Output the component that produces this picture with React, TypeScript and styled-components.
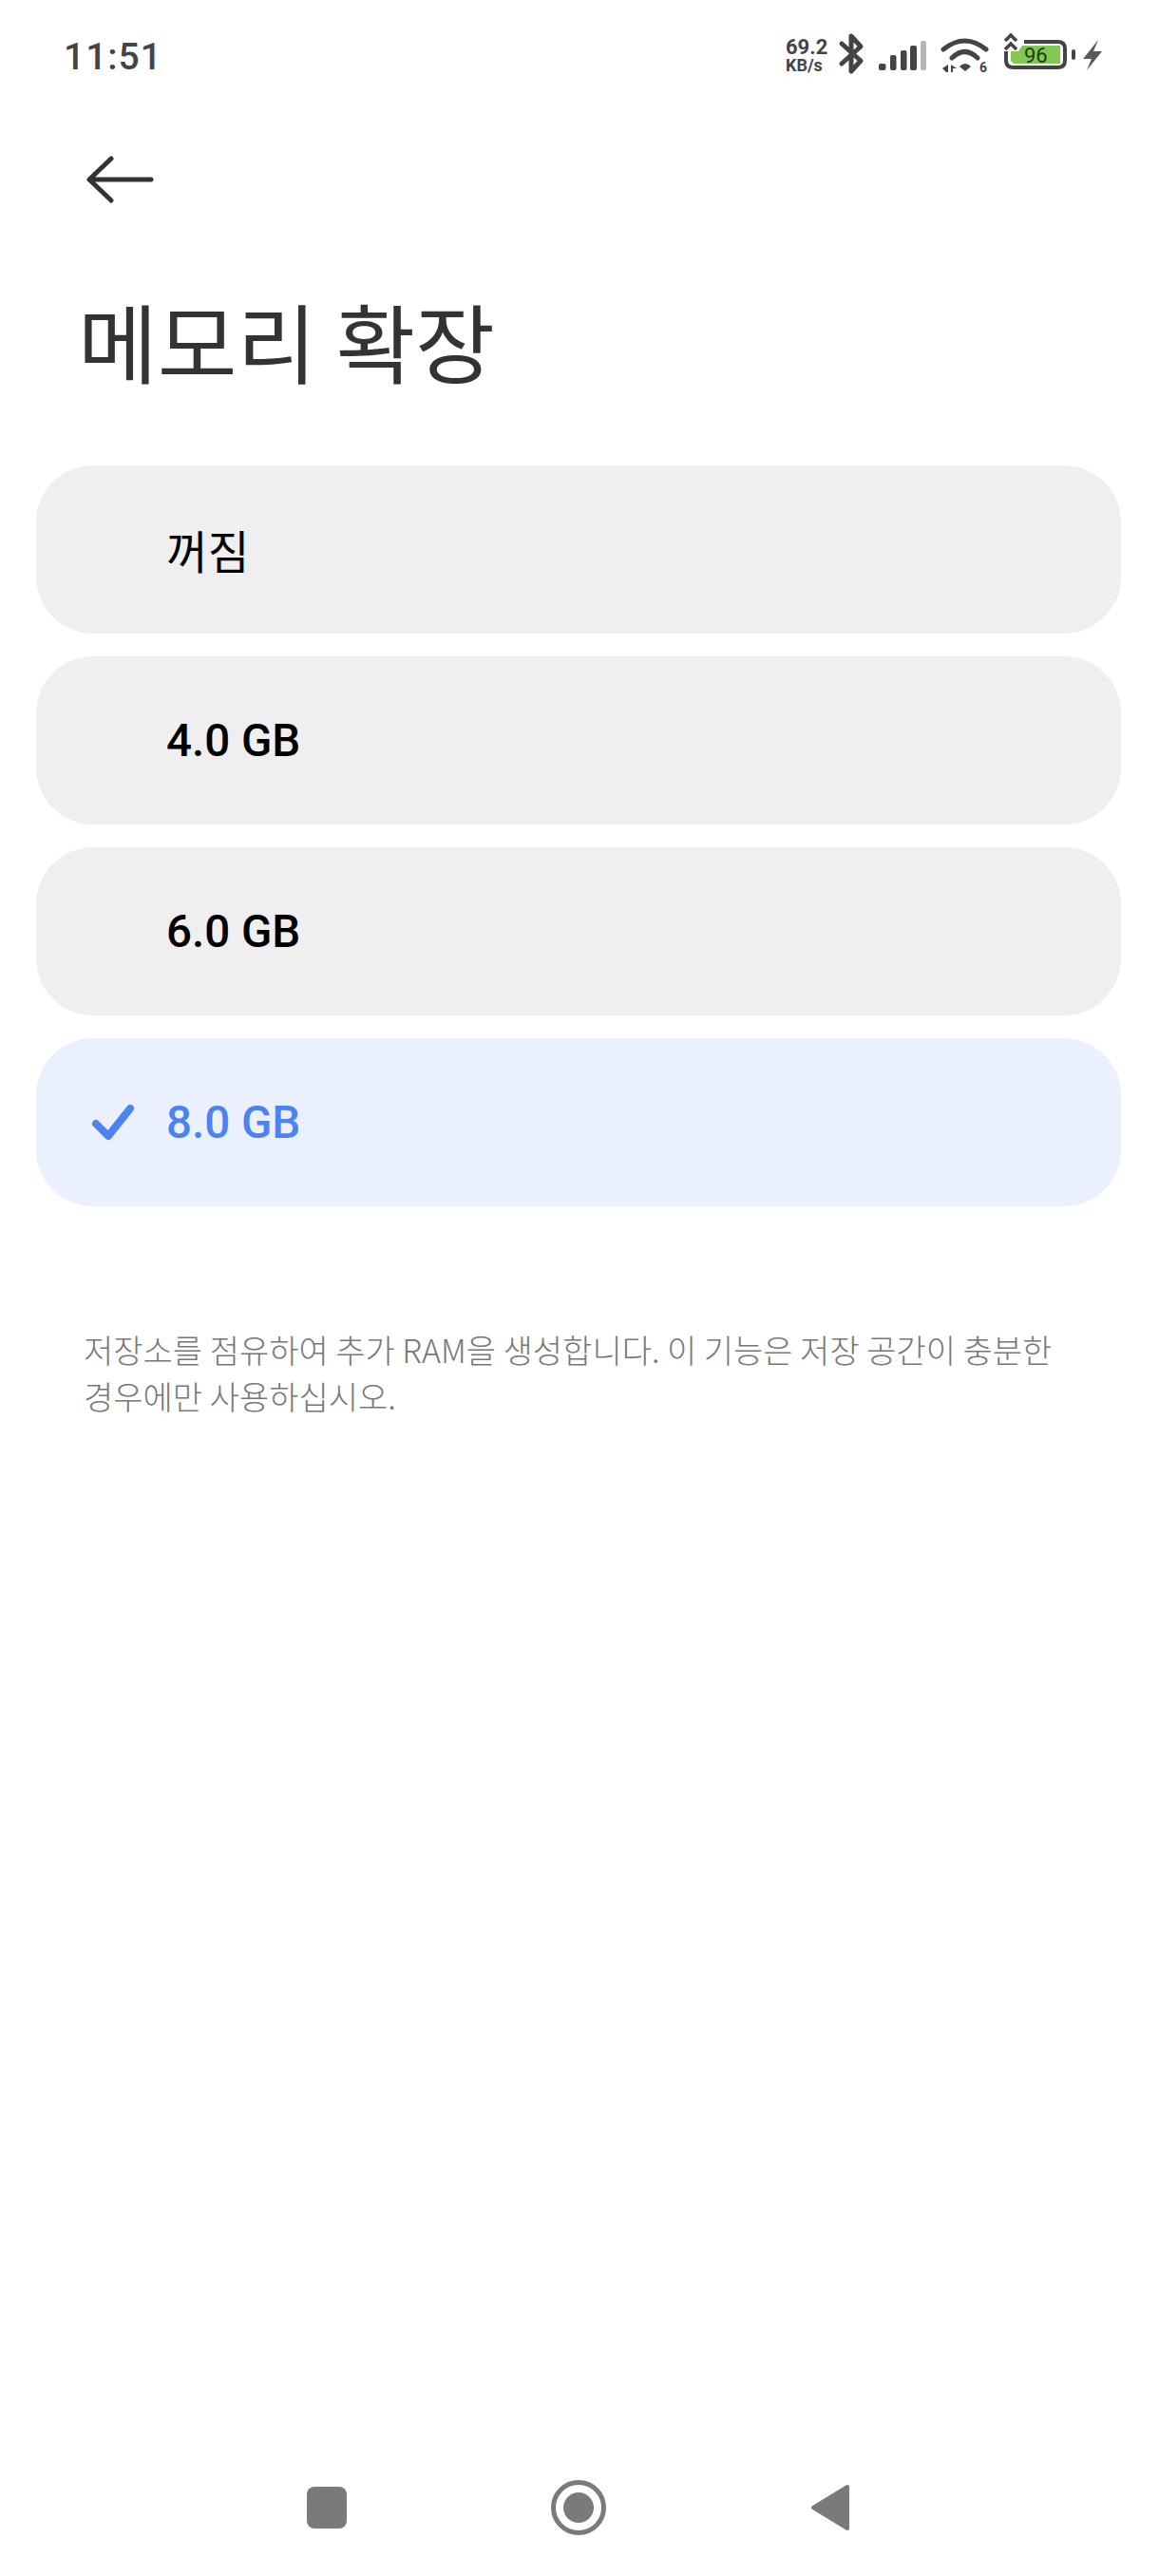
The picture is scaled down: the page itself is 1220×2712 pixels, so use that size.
import styled, { createGlobalStyle } from 'styled-components';

const GlobalStyle = createGlobalStyle`
  html, body {
    margin: 0;
    padding: 0;
    background: #ffffff;
  }
`;

const Screen = styled.div`
  width: 1220px;
  height: 2712px;
  display: flex;
  flex-direction: column;
  overflow: hidden;
  background: #ffffff;
  font-family: Roboto, 'Noto Sans CJK KR', sans-serif;
`;

const StatusBar = styled.div`
  height: 60px;
  padding: 28px 55px 0 67px;
  display: flex;
  align-items: center;
  justify-content: space-between;
`;

const Clock = styled.div`
  font-size: 39px;
  font-weight: 500;
  letter-spacing: 1px;
  color: #444444;
  transform: translateY(2px);
`;

const StatusIcons = styled.div`
  display: flex;
  align-items: center;
`;

const BackRow = styled.div`
  margin-top: 76px;
  padding-left: 91px;
  height: 50px;
  display: flex;
  align-items: center;
`;

const Title = styled.h1`
  margin: 88px 0 0 82px;
  font-family: 'Noto Sans CJK KR', sans-serif;
  font-size: 91px;
  line-height: 110px;
  font-weight: 400;
  color: #333333;
`;

const OptionList = styled.div`
  margin: 78px 40px 0 38px;
  display: flex;
  flex-direction: column;
  gap: 24px;
`;

const Option = styled.div<{ $selected?: boolean; $hangul?: boolean }>`
  height: 177px;
  border-radius: 60px;
  display: flex;
  align-items: center;
  position: relative;
  padding-left: 137px;
  background: ${(p) => (p.$selected ? '#eaf1fd' : '#efefef')};
  color: ${(p) => (p.$selected ? '#4d82f3' : '#000000')};
  font-size: 47.5px;
  font-weight: ${(p) => (p.$hangul ? 400 : 500)};
`;

const CheckMark = styled.svg`
  position: absolute;
  left: 57px;
  top: 62px;
`;

const Description = styled.p`
  margin: 126px 70px 0 88px;
  font-family: 'Noto Sans CJK KR', Roboto, sans-serif;
  font-size: 34px;
  font-weight: 300;
  line-height: 49px;
  color: #777777;
  word-break: keep-all;
`;

const NavBar = styled.div`
  margin-top: auto;
  height: 92px;
  padding: 0 325px 26px 323px;
  display: flex;
  align-items: center;
  justify-content: space-between;
`;

const options = ['꺼짐', '4.0 GB', '6.0 GB', '8.0 GB'];
const selectedOption = '8.0 GB';

const SpeedText = styled.text`
  font-family: Roboto, sans-serif;
  font-weight: 700;
  fill: #444444;
`;

const BatteryText = styled.text`
  font-family: Roboto, sans-serif;
  font-size: 22px;
  fill: #1f3a10;
`;

const WifiText = styled.text`
  font-family: Roboto, sans-serif;
  font-size: 14px;
  font-weight: 700;
  fill: #444444;
`;

const StatusIconsSvg = () => (
  <svg width="345" height="60" viewBox="0 0 345 60">
    <SpeedText x="7" y="29" fontSize="22">69.2</SpeedText>
    <SpeedText x="7" y="47" fontSize="18">KB/s</SpeedText>
    <path d="M66 18 L86 36 L76 47 V10 L86 21 L66 39" fill="none" stroke="#444444" strokeWidth="5" strokeLinejoin="round" strokeLinecap="round" />
    <rect x="105" y="39" width="7.5" height="7" rx="2" fill="#444444" />
    <rect x="117" y="30" width="6.5" height="16" rx="2" fill="#444444" />
    <rect x="128" y="25" width="6.5" height="21" rx="2" fill="#444444" />
    <rect x="138" y="20" width="7" height="26" rx="2" fill="#444444" />
    <rect x="149" y="15" width="6" height="31" rx="2" fill="#b5b5b5" />
    <path d="M173 24 Q195.5 6 218 24 M182 33 Q195.5 20 209 33" fill="none" stroke="#444444" strokeWidth="5" strokeLinecap="round" />
    <path d="M190 42 Q196 36 202 42 L196 47 Z" fill="#444444" />
    <path d="M172 44 L178 40 V48 H176 Z M181 40 L187 44 L183 44 V48 H181 Z" fill="#444444" />
    <WifiText x="211" y="48">6</WifiText>
    <path d="M256 20 H296 V39 H249 Q244 39 244 34 V26 L252 26 Z" fill="#82c853" />
    <path d="M258 16 H293 Q301 16 301 23 V36 Q301 43 293 43 H247 Q239 43 239 36 V26" fill="none" stroke="#444444" strokeWidth="4" />
    <rect x="308" y="24" width="4" height="11" rx="2" fill="#444444" />
    <BatteryText x="258" y="38">96</BatteryText>
    <path d="M238 15 L244 9 L250 15 M238 24 L244 18 L250 24" fill="none" stroke="#444444" strokeWidth="3.5" />
    <path d="M336 14 L320 34 H329 L324 46 L340 26 H331 Z" fill="#5a5a5a" />
  </svg>
);

export default function App() {
  return (
    <Screen>
      <GlobalStyle />
      <StatusBar>
        <Clock>11:51</Clock>
        <StatusIcons>
          <StatusIconsSvg />
        </StatusIcons>
      </StatusBar>
      <BackRow>
        <svg width="72" height="50" viewBox="0 0 72 50">
          <path d="M26 3 L3 25 L26 47 M3 25 H68" fill="none" stroke="#333333" strokeWidth="5" strokeLinecap="round" strokeLinejoin="round" />
        </svg>
      </BackRow>
      <Title>메모리 확장</Title>
      <OptionList>
        {options.map((label) => (
          <Option key={label} $selected={label === selectedOption} $hangul={label === '꺼짐'}>
            {label === selectedOption && (
              <CheckMark width="50" height="50" viewBox="0 0 50 50">
                <path d="M6 28 L19 41 L42 12" fill="none" stroke="#4d82f3" strokeWidth="8" strokeLinecap="round" strokeLinejoin="round" />
              </CheckMark>
            )}
            {label}
          </Option>
        ))}
      </OptionList>
      <Description>
        저장소를 점유하여 추가 RAM을 생성합니다. 이 기능은 저장 공간이 충분한 경우에만 사용하십시오.
      </Description>
      <NavBar>
        <svg width="42" height="44" viewBox="0 0 42 44">
          <rect width="42" height="44" rx="8" fill="#7a7a7a" />
        </svg>
        <svg width="58" height="58" viewBox="0 0 58 58">
          <circle cx="29" cy="29" r="26.5" fill="none" stroke="#7a7a7a" strokeWidth="5" />
          <circle cx="29" cy="29" r="16" fill="#7a7a7a" />
        </svg>
        <svg width="42" height="50" viewBox="0 0 42 50">
          <path d="M39 3 V47 L3 25 Z" fill="#7a7a7a" stroke="#7a7a7a" strokeWidth="4" strokeLinejoin="round" />
        </svg>
      </NavBar>
    </Screen>
  );
}
